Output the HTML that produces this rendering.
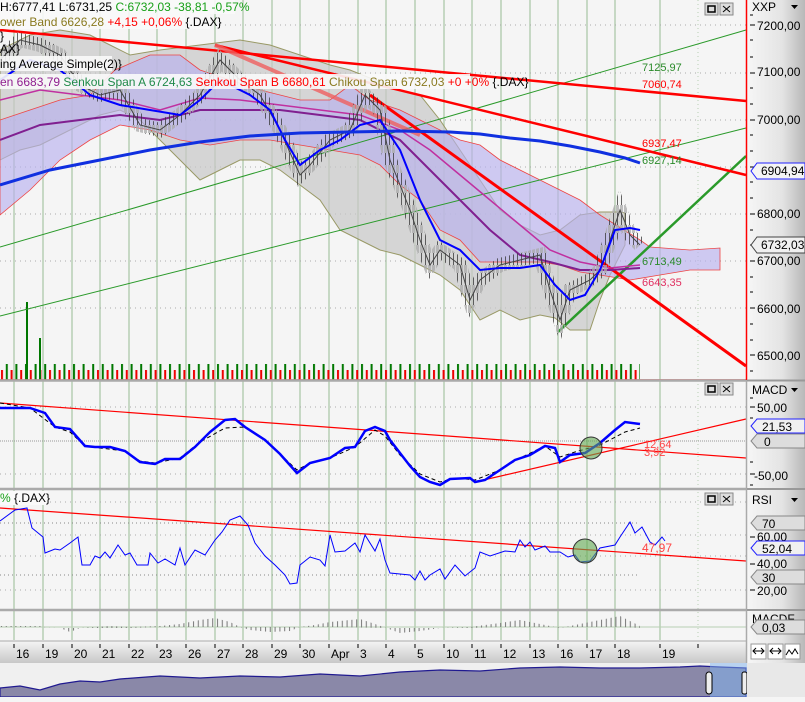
<!DOCTYPE html>
<html><head><meta charset="utf-8"><style>
body{margin:0;width:805px;height:697px;overflow:hidden;background:#f5f5f5;font-family:"Liberation Sans",sans-serif}
svg text{font-family:"Liberation Sans",sans-serif}
</style></head><body>
<svg width="805" height="697" viewBox="0 0 805 697" xmlns="http://www.w3.org/2000/svg">
<defs>
<linearGradient id="ax" x1="0" x2="1"><stop offset="0" stop-color="#f6f6f6"/><stop offset="0.6" stop-color="#e4e4e4"/><stop offset="1" stop-color="#b8b8b8"/></linearGradient>
<linearGradient id="dax" x1="0" y1="0" x2="0" y2="1"><stop offset="0" stop-color="#f4f4f4"/><stop offset="1" stop-color="#c8c8c8"/></linearGradient>
<pattern id="vol" width="9.6" height="20" patternUnits="userSpaceOnUse" x="0" y="360"><rect x="1" y="10" width="2" height="10" fill="#e00"/><rect x="5.8" y="4" width="2" height="16" fill="#070"/></pattern>
<pattern id="hist" width="4.8" height="40" patternUnits="userSpaceOnUse"><rect x="1" y="0" width="1" height="40" fill="#777"/></pattern>
<pattern id="cdl" width="4" height="20" patternUnits="userSpaceOnUse"><rect x="1" y="0" width="1" height="20" fill="#333"/><rect x="0" y="5" width="3" height="8" fill="#aaa"/></pattern>
</defs>
<rect width="805" height="697" fill="#f5f5f5"/>
<g stroke="#b7cfb3" stroke-width="1.5">
<path d="M14 0V640M43 0V640M72 0V640M100 0V640M129 0V640M157 0V640M186 0V640M215 0V640M243 0V640M272 0V640M300 0V640M329 0V640M358 0V640M386 0V640M415 0V640M444 0V640M472 0V640M501 0V640M530 0V640M558 0V640M587 0V640M615 0V640M660 0V640"/>
</g>
<path d="M698 0V640" stroke="#b7cfb3" stroke-dasharray="1 3"/>
<g stroke="#aaa" stroke-dasharray="1 4">
<path d="M0 25H746M0 73H746M0 120H746M0 167H746M0 214H746M0 261H746M0 308H746"/>
<path d="M0 407H746M0 474H746M0 502H746M0 535H746M0 556H746M0 590H746"/>
</g>
<path d="M0 441H746" stroke="#999" stroke-dasharray="1 1"/>
<path d="M0 523H640M0 575H640" stroke="#888" stroke-dasharray="1 3"/>

<polygon points="0,50 30,35 60,30 90,35 110,45 130,55 160,50 200,45 240,40 270,45 300,55 330,65 350,70 375,80 400,90 420,95 440,120 460,150 480,180 500,210 520,225 540,235 560,230 580,215 600,212 620,212 625,213 625,245 610,275 600,300 590,330 570,330 555,318 540,315 520,320 500,310 480,320 460,290 440,275 420,265 400,255 380,250 360,240 340,230 320,200 300,185 280,170 260,160 240,160 220,170 200,180 180,160 160,140 140,120 120,110 100,115 80,125 60,135 40,145 20,150 0,160" fill="#c8c8c8" fill-opacity="0.7" stroke="#999966" stroke-width="1"/>
<polygon points="0,120 30,110 60,100 90,95 115,70 150,55 180,55 200,70 230,80 260,90 300,100 330,100 350,85 370,100 400,110 430,125 460,140 480,145 500,160 540,180 570,195 580,200 600,215 640,240 650,247 690,250 720,248 720,270 690,270 660,275 630,280 600,275 580,272 560,265 540,262 520,262 500,262 480,262 460,240 440,230 420,200 400,185 380,165 360,155 330,150 300,145 270,140 240,140 210,145 180,140 150,130 120,125 90,140 60,160 30,190 0,215" fill="#b8b0ee" fill-opacity="0.65" stroke="#e44" stroke-width="0.8"/>
<rect x="0" y="360" width="640" height="20" fill="url(#vol)"/>
<rect x="26" y="302" width="2" height="78" fill="#070"/><rect x="39" y="338" width="2" height="42" fill="#070"/>
<path d="M0 380H746" stroke="#e00" stroke-width="1.5"/>
<path d="M0 247L746 30" stroke="#2a9a2a" stroke-width="1"/>
<path d="M0 316L746 128" stroke="#2a9a2a" stroke-width="1"/>
<path d="M558 332L746 156" stroke="#2a9a2a" stroke-width="2.5"/>
<path d="M0 30L746 101" stroke="#f00" stroke-width="2.5"/>
<path d="M215 45L746 175" stroke="#f00" stroke-width="2.5"/>
<path d="M370 95L746 366" stroke="#f00" stroke-width="3"/>
<path d="M215 45L420 135" stroke="#f06060" stroke-width="4" opacity="0.8"/>
<polyline points="0,100 40,90 80,95 120,100 160,110 200,98 240,100 280,105 320,110 360,115 400,130 430,150 460,175 490,200 520,225 550,250 580,262 610,268 640,265" fill="none" stroke="#c030a0" stroke-width="1.5"/>
<polyline points="0,140 40,125 80,120 120,115 160,120 200,110 240,110 280,110 320,115 360,120 400,140 430,170 460,200 490,230 520,255 550,262 580,270 610,270 640,268" fill="none" stroke="#802090" stroke-width="2"/>
<polyline points="0,60 20,40 40,45 60,55 80,85 100,95 120,90 140,125 160,130 180,115 200,95 220,60 240,80 260,95 280,130 300,175 310,165 330,140 350,130 365,95 380,110 390,160 400,185 410,210 420,240 430,265 440,250 460,265 470,300 480,280 500,265 520,260 540,255 550,290 560,320 570,290 590,280 600,270 610,240 620,210 630,235 640,245" fill="none" stroke="url(#cdl)" stroke-width="14" opacity="0.75"/>
<polyline points="0,60 20,40 40,45 60,55 80,85 100,95 120,90 140,125 160,130 180,115 200,95 220,60 240,80 260,95 280,130 300,175 310,165 330,140 350,130 365,95 380,110 390,160 400,185 410,210 420,240 430,265 440,250 460,265 470,300 480,280 500,265 520,260 540,255 550,290 560,320 570,290 590,280 600,270 610,240 620,210 630,235 640,245" fill="none" stroke="#444" stroke-width="1"/>
<polyline points="0,80 30,60 60,70 90,95 120,105 150,110 180,115 200,100 220,80 250,95 270,110 285,140 300,165 320,150 340,140 360,125 380,120 400,150 420,200 440,240 460,250 480,270 500,268 520,268 540,265 555,285 570,300 585,295 600,270 615,230 630,228 640,230" fill="none" stroke="#00f" stroke-width="2"/>
<polyline points="0,185 50,170 100,160 150,150 200,142 250,136 300,133 350,132 400,131 450,132 480,134 510,138 540,141 570,146 600,152 625,158 640,163" fill="none" stroke="#1030e0" stroke-width="3"/>
<g font-size="11">
<text x="642" y="71" fill="#2a8a2a">7125,97</text>
<text x="642" y="88" fill="#f00">7060,74</text>
<text x="642" y="147" fill="#f00">6937,47</text>
<text x="642" y="164" fill="#2a8a2a">6927,14</text>
<text x="642" y="265" fill="#2a8a2a">6713,49</text>
<text x="642" y="286" fill="#e03060">6643,35</text>
</g>
<rect x="0" y="0" width="235" height="14" fill="#fafafa" opacity="0.9"/>
<text y="11" font-size="12"><tspan x="0" fill="#000">H:6777,41 L:6731,25 </tspan><tspan fill="#18a018">C:6732,03 -38,81 -0,57%</tspan></text>
<rect x="0" y="14" width="210" height="15" fill="#fafafa" opacity="0.9"/>
<text y="26" font-size="12"><tspan x="0" fill="#8a7a20">ower Band 6626,28 </tspan><tspan fill="#f00">+4,15 +0,06% </tspan><tspan fill="#000">{.DAX}</tspan></text>
<text x="0" y="40" font-size="12">}</text>
<text x="0" y="53" font-size="12">AX}</text>
<rect x="0" y="56" width="112" height="15" fill="#fafafa" opacity="0.9"/>
<text x="0" y="68" font-size="12">ing Average Simple(2)}</text>
<rect x="0" y="74" width="470" height="15" fill="#fafafa" opacity="0.9"/>
<text y="86" font-size="12"><tspan x="0" fill="#902090">en 6683,79 </tspan><tspan fill="#208a4a">Senkou Span A 6724,63 </tspan><tspan fill="#f00">Senkou Span B 6680,61 </tspan><tspan fill="#8a7a20">Chikou Span 6732,03 </tspan><tspan fill="#f00">+0 +0% </tspan><tspan fill="#000">{.DAX}</tspan></text>

<path d="M0 380.5H746M0 489H746M0 610H746" stroke="#aaa" stroke-width="2.5"/>
<path d="M0 403L746 458" stroke="#f00" stroke-width="1.2"/>
<path d="M475 482L746 419" stroke="#f00" stroke-width="1.2"/>
<polyline points="0,403 30,408 55,427 70,432 85,446 100,448 125,451 140,461 155,463 180,458 200,442 225,428 245,427 265,440 297,470 310,463 330,458 355,447 375,430 385,436 400,455 420,474 440,482 455,478 475,480 500,470 520,458 545,446 560,457 575,452 600,445 625,432 640,428" fill="none" stroke="#000" stroke-dasharray="4 3" stroke-width="1"/>
<polyline points="0,408 30,408 45,413 55,427 70,429 85,446 95,447 110,447 125,451 140,462 155,464 165,459 180,459 195,447 210,432 225,420 235,419 245,427 265,440 280,454 297,473 310,463 330,458 345,448 355,447 365,431 375,427 385,431 390,440 400,453 410,466 420,477 430,482 440,485 450,479 470,478 475,482 485,480 500,470 515,460 530,455 545,446 555,448 560,462 570,455 585,453 600,443 615,430 625,422 640,424" fill="none" stroke="#00f" stroke-width="2.5"/>
<circle cx="591" cy="448" r="11" fill="#60a850" fill-opacity="0.6" stroke="#333"/>
<text x="644" y="448" font-size="11" fill="#f44">12,64</text>
<text x="644" y="456" font-size="11" fill="#f44">3,92</text>
<g transform="translate(705,383)"><rect width="13" height="12" fill="#ddd" stroke="#888"/><rect x="3" y="3" width="7" height="6" fill="none" stroke="#000" stroke-width="1.5"/><rect x="15" width="13" height="12" fill="#ddd" stroke="#888"/><path d="M18 3l7 6M25 3l-7 6" stroke="#000"/></g>
<path d="M0 508L746 561" stroke="#f00" stroke-width="1.2"/>
<polyline points="0,521 15,510 27,508 32,528 43,537 45,553 55,549 60,550 70,543 78,537 82,565 90,565 95,556 100,558 105,552 110,558 118,545 125,555 130,553 137,565 148,565 150,553 158,563 165,559 175,565 180,548 185,565 195,550 205,555 215,540 222,532 230,520 240,516 248,525 255,543 265,556 275,565 285,575 290,584 297,583 300,565 310,557 320,560 325,566 330,535 335,552 345,551 355,543 360,552 365,535 375,551 380,539 385,560 390,573 400,574 410,575 415,580 420,571 425,580 430,575 440,569 445,579 455,565 465,576 475,568 480,552 490,556 505,551 515,552 520,540 525,547 530,542 535,550 545,546 550,552 560,552 568,557 575,555 580,562 590,561 600,548 615,545 620,537 630,522 635,533 642,527 650,542 655,545 662,537 665,541" fill="none" stroke="#00f" stroke-width="1"/>
<circle cx="585" cy="551" r="12" fill="#60a850" fill-opacity="0.6" stroke="#333"/>
<text x="642" y="552" font-size="12" fill="#f44">47,97</text>
<rect x="0" y="491" width="48" height="14" fill="#fafafa"/>
<text y="502" font-size="12"><tspan x="0" fill="#18a018">% </tspan><tspan fill="#000">{.DAX}</tspan></text>
<g transform="translate(705,493)"><rect width="13" height="12" fill="#ddd" stroke="#888"/><rect x="3" y="3" width="7" height="6" fill="none" stroke="#000" stroke-width="1.5"/><rect x="15" width="13" height="12" fill="#ddd" stroke="#888"/><path d="M18 3l7 6M25 3l-7 6" stroke="#000"/></g>
<g transform="translate(705,3)"><rect width="13" height="12" fill="#ddd" stroke="#888"/><rect x="3" y="3" width="7" height="6" fill="none" stroke="#000" stroke-width="1.5"/><rect x="15" width="13" height="12" fill="#ddd" stroke="#888"/><path d="M18 3l7 6M25 3l-7 6" stroke="#000"/></g>
<path d="M0 627H746" stroke="#b7cfb3"/>
<polygon points="0,626 40,626 45,627 60,628 70,632 80,628 95,627 110,626 130,627 160,626 180,624 200,620 215,618 230,622 240,627 250,630 270,632 290,631 300,627 315,625 330,622 340,621 360,619 375,624 386,628 400,633 420,631 440,628 470,627 500,623 520,620 540,624 560,628 580,624 600,620 620,616 640,626 640,628 620,627 580,627 540,627 500,627 470,628 440,628 386,628 330,627 240,627 160,627 130,628 90,628 60,628 40,627 0,627" fill="url(#hist)"/>
<rect x="0" y="641" width="746" height="22" fill="url(#dax)"/>
<path d="M0 641H746" stroke="#aaa"/>
<g stroke="#000"><path d="M14 644v4M43 644v4M72 644v4M100 644v4M129 644v4M157 644v4M186 644v4M215 644v4M243 644v4M272 644v4M300 644v4M329 644v4M358 644v4M386 644v4M415 644v4M444 644v4M472 644v4M501 644v4M530 644v4M558 644v4M587 644v4M615 644v4M660 644v4M698 644v4"/></g>
<g font-size="12" fill="#000"><text x="16" y="658">16</text><text x="45" y="658">19</text><text x="74" y="658">20</text><text x="102" y="658">21</text><text x="131" y="658">22</text><text x="159" y="658">23</text><text x="188" y="658">26</text><text x="217" y="658">27</text><text x="245" y="658">28</text><text x="274" y="658">29</text><text x="302" y="658">30</text><text x="331" y="658">Apr</text><text x="360" y="658">3</text><text x="388" y="658">4</text><text x="417" y="658">5</text><text x="446" y="658">10</text><text x="474" y="658">11</text><text x="503" y="658">12</text><text x="532" y="658">13</text><text x="560" y="658">16</text><text x="589" y="658">17</text><text x="617" y="658">18</text><text x="662" y="658">19</text></g>
<rect x="0" y="663" width="805" height="34" fill="#f0f0f0"/>
<polygon points="0,688 20,686 40,690 60,684 80,681 100,682 120,679 160,676 200,678 240,676 280,677 320,674 360,676 400,672 440,670 480,671 520,668 560,667 600,668 640,668 680,667 700,666 720,667 746,668 746,697 0,697" fill="#8a88a8" stroke="#201a90" stroke-width="1.2"/>
<rect x="710" y="663" width="37" height="34" fill="#7fb4ef" opacity="0.5"/>
<rect x="706" y="672" width="6" height="22" rx="3" fill="#eee" stroke="#000"/>
<rect x="742" y="672" width="5" height="22" rx="2" fill="#eee" stroke="#000"/>
<rect x="747" y="0" width="58" height="663" fill="url(#ax)"/>
<path d="M746.5 0V380" stroke="#f00" stroke-width="1.5"/>
<path d="M746.5 380V663" stroke="#aaa" stroke-width="1.5"/>
<path d="M747 380.5H805M747 489H805M747 610H805" stroke="#999" stroke-width="2"/>
<g font-size="12" fill="#000">
<text x="752" y="11">XXP</text><path d="M791 5h7l-3.5 4z"/>
<text x="757" y="30">7200,00</text><text x="757" y="76">7100,00</text><text x="757" y="124">7000,00</text><text x="757" y="218">6800,00</text><text x="757" y="265">6700,00</text><text x="757" y="313">6600,00</text><text x="757" y="360">6500,00</text>
<text x="752" y="394">MACD</text><path d="M791 388h7l-3.5 4z"/>
<text x="757" y="412">50,00</text><text x="754" y="480">-50,00</text>
<text x="752" y="504">RSI</text><path d="M791 498h7l-3.5 4z"/>
<text x="757" y="541">60,00</text><text x="757" y="568">40,00</text><text x="757" y="595">20,00</text>
<text x="752" y="623">MACDF</text>
</g>
<g stroke="#000"><path d="M750 15h3M750 25h5M750 40h3M750 57h3M750 73h5M750 88h3M750 104h3M750 120h5M750 135h3M750 151h3M750 167h5M750 182h3M750 198h3M750 214h5M750 230h3M750 245h3M750 261h5M750 277h3M750 292h3M750 308h5M750 324h3M750 340h3M750 355h5M750 371h3M750 398h3M750 407h5M750 418h3M750 462h3M750 474h5M750 485h3M750 537h5M750 564h5M750 590h5"/></g>
<g font-size="12">
<path d="M757 163h48v16h-48l-6-8z" fill="#f4f4f4" stroke="#22f"/><text x="761" y="175">6904,94</text>
<path d="M757 237h48v16h-48l-6-8z" fill="#f0f0f0" stroke="#444"/><text x="761" y="249">6732,03</text>
<path d="M757 419h48v14h-48l-6-7z" fill="#f0f0f0" stroke="#22f"/><text x="762" y="431">21,53</text>
<path d="M757 434h48v14h-48l-6-7z" fill="#ddd" stroke="#888"/><text x="764" y="446">0</text>
<path d="M757 516h48v14h-48l-6-7z" fill="#ddd" stroke="#888"/><text x="762" y="528">70</text>
<path d="M757 541h48v14h-48l-6-7z" fill="#f0f0f0" stroke="#22f"/><text x="762" y="553">52,04</text>
<path d="M757 570h48v14h-48l-6-7z" fill="#ddd" stroke="#888"/><text x="762" y="582">30</text>
<path d="M757 620h48v14h-48l-6-7z" fill="#ddd" stroke="#888"/><text x="762" y="632">0,03</text>
</g>
<rect x="747" y="663" width="58" height="34" fill="#e8e8e8"/>
<g stroke="#000" fill="#fff"><rect x="751" y="644" width="15" height="15" stroke="#999"/><rect x="768" y="644" width="15" height="15" stroke="#999"/><rect x="785" y="644" width="15" height="15" stroke="#999"/></g>
<path d="M753 651h11M756 648l-3 3 3 3M761 648l3 3-3 3M770 651h11M773 648l-3 3 3 3M778 648l3 3-3 3M786 655l3-5 3 4 3-5 3 5" stroke="#000" fill="none"/>
</svg>
</body></html>
